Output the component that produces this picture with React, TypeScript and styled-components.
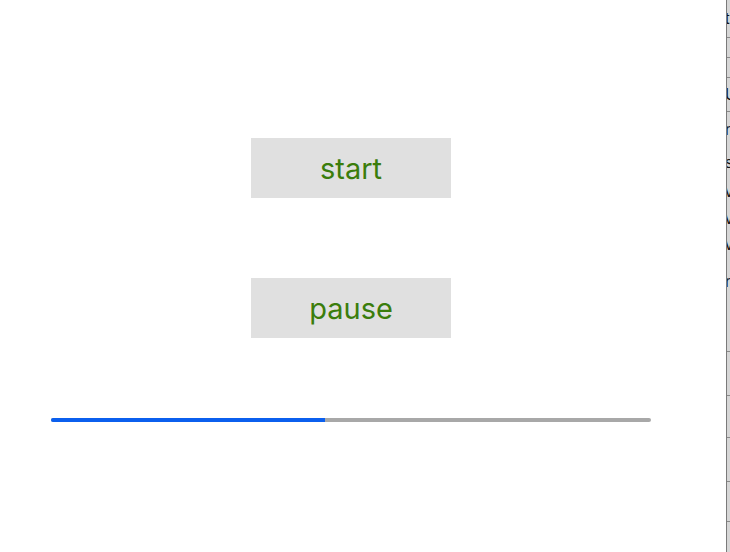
import React from "react";
import styled, { createGlobalStyle } from "styled-components";

const Global = createGlobalStyle`
  html, body { margin: 0; padding: 0; background: #fff; }
  body { font-family: Inter, "Noto Sans", sans-serif; overflow: hidden; }
`;

const Page = styled.div`
  display: flex;
  width: 730px;
  height: 552px;
`;

const Main = styled.div`
  width: 726px;
  flex: none;
  padding: 138px 0 0 51px;
  box-sizing: border-box;
`;

const Column = styled.div`
  width: 600px;
  display: flex;
  flex-direction: column;
  align-items: center;
  gap: 80px;
`;

const Button = styled.button`
  width: 200px;
  height: 60px;
  border: none;
  background: #e0e0e0;
  color: #3b7d0c;
  font-family: Inter, "Noto Sans", sans-serif;
  font-size: 29px;
  padding: 0;
  margin: 0;
  display: flex;
  align-items: center;
  justify-content: center;
  box-sizing: border-box;
`;

const Track = styled.div`
  width: 600px;
  height: 4px;
  border-radius: 2px;
  background: #a8a8a8;
  overflow: hidden;
  display: flex;
`;

const Fill = styled.div`
  height: 100%;
  background: #0b5fee;
`;

const Side = styled.div`
  flex: 1;
  border-left: 1px solid #7a7a7a;
  background: #d6d6d6;
  overflow: hidden;
  display: flex;
  flex-direction: column;
`;

const Cell = styled.div<{ $h: number; $line?: boolean }>`
  height: ${(p) => p.$h}px;
  flex: none;
  border-bottom: 1px solid ${(p) => (p.$line ? "#8a8a8a" : "transparent")};
  box-sizing: border-box;
  font-family: "Liberation Sans", sans-serif;
  font-size: 16px;
  line-height: ${(p) => p.$h}px;
  color: #111;
  white-space: nowrap;
  margin-left: -2px;
`;

const rows: { h: number; t: string; line?: boolean }[] = [
  { h: 38, t: "t", line: true },
  { h: 20, t: "", line: true },
  { h: 20, t: "", line: true },
  { h: 34, t: "U", line: true },
  { h: 36, t: "r" },
  { h: 30, t: "s" },
  { h: 28, t: "v" },
  { h: 26, t: "v" },
  { h: 26, t: "v" },
  { h: 48, t: "r" },
  { h: 46, t: "", line: true },
  { h: 44, t: "", line: true },
  { h: 42, t: "", line: true },
  { h: 44, t: "", line: true },
  { h: 40, t: "", line: true },
];

export default function App() {
  const progress = 274 / 600;
  return (
    <Page>
      <Global />
      <Main>
        <Column>
          <Button>start</Button>
          <Button>pause</Button>
          <Track>
            <Fill style={{ width: `${progress * 100}%` }} />
          </Track>
        </Column>
      </Main>
      <Side>
        {rows.map((r, i) => (
          <Cell key={i} $h={r.h} $line={r.line}>
            {r.t}
          </Cell>
        ))}
      </Side>
    </Page>
  );
}
